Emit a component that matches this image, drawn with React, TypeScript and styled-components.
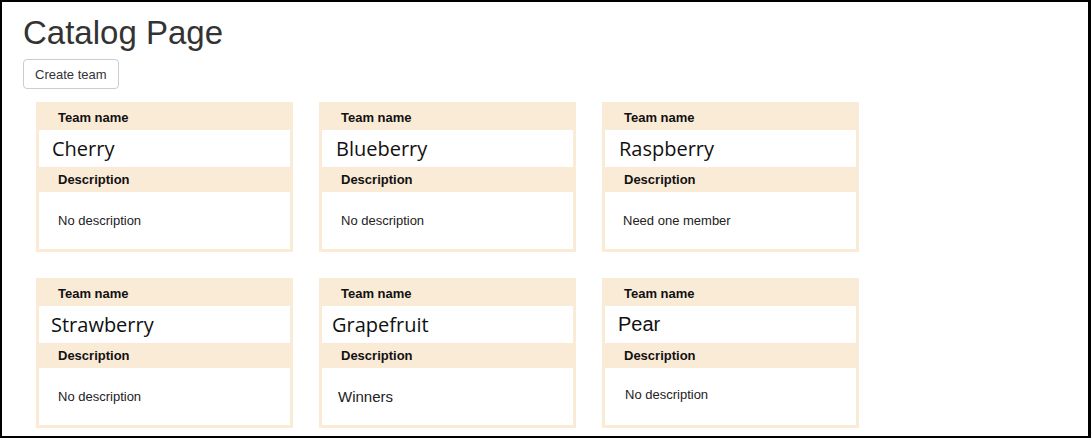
import React, { FunctionComponent } from 'react';
import styled, { createGlobalStyle } from 'styled-components';

const GlobalStyle = createGlobalStyle`
  html, body {
    margin: 0;
    padding: 0;
    background: #fff;
  }
  body {
    font-family: "Liberation Sans", Arial, sans-serif;
  }
`;

const S = {
  Frame: styled.div`
    box-sizing: border-box;
    width: 1091px;
    height: 438px;
    border-style: solid;
    border-color: #000;
    border-width: 2px 3px 2px 2px;
    padding: 13px 0 0 21px;
    overflow: hidden;
  `,

  Title: styled.h1`
    margin: 0;
    font-size: 33px;
    line-height: 36px;
    font-weight: 400;
    color: #333;
  `,

  CreateButton: styled.button`
    display: block;
    box-sizing: border-box;
    height: 30px;
    margin-top: 8px;
    padding: 0 11px;
    border: 1px solid #ccc;
    border-radius: 4px;
    background: #fff;
    color: #333;
    font-family: "Liberation Sans", Arial, sans-serif;
    font-size: 13px;
  `,

  Grid: styled.div`
    display: grid;
    grid-template-columns: repeat(3, 257px);
    column-gap: 26px;
    row-gap: 26px;
    margin: 13px 0 0 13px;
  `,

  Card: styled.div`
    box-sizing: border-box;
    display: flex;
    flex-direction: column;
    width: 257px;
    border: 3px solid antiquewhite;
  `,

  Label: styled.div`
    display: flex;
    align-items: center;
    height: 25px;
    padding-left: 19px;
    background: antiquewhite;
    color: #111;
    font-size: 13px;
    font-weight: 700;
  `,

  Name: styled.div<{ $indent: number; $arial?: boolean }>`
    display: flex;
    align-items: center;
    height: 37px;
    padding-left: ${(p) => p.$indent}px;
    background: #fff;
    color: #111;
    font-family: ${(p) =>
      p.$arial ? '"Liberation Sans", Arial, sans-serif' : '"Open Sans", "Noto Sans", sans-serif'};
    font-size: 20px;
  `,

  Body: styled.div<{ $indent: number; $size: number; $lift: number }>`
    display: flex;
    align-items: center;
    box-sizing: border-box;
    height: 57px;
    padding-left: ${(p) => p.$indent}px;
    padding-bottom: ${(p) => p.$lift}px;
    background: #fff;
    color: #222;
    font-size: ${(p) => p.$size}px;
  `,
};

type Team = {
  name: string;
  description: string;
  nameIndent: number;
  descIndent: number;
  descSize?: number;
  descLift?: number;
  arial?: boolean;
};

const teams: Team[] = [
  { name: 'Cherry', description: 'No description', nameIndent: 13, descIndent: 19 },
  { name: 'Blueberry', description: 'No description', nameIndent: 14, descIndent: 19 },
  { name: 'Raspberry', description: 'Need one member', nameIndent: 14, descIndent: 18 },
  { name: 'Strawberry', description: 'No description', nameIndent: 12, descIndent: 19 },
  { name: 'Grapefruit', description: 'Winners', nameIndent: 10, descIndent: 16, descSize: 15 },
  { name: 'Pear', description: 'No description', nameIndent: 13, descIndent: 20, descLift: 5, arial: true },
];

const TeamCard: FunctionComponent<{ team: Team }> = ({ team }) => (
  <S.Card>
    <S.Label>Team name</S.Label>
    <S.Name $indent={team.nameIndent} $arial={team.arial}>
      {team.name}
    </S.Name>
    <S.Label>Description</S.Label>
    <S.Body $indent={team.descIndent} $size={team.descSize ?? 13} $lift={team.descLift ?? 0}>
      {team.description}
    </S.Body>
  </S.Card>
);

const App: FunctionComponent = () => (
  <>
    <GlobalStyle />
    <S.Frame>
      <S.Title>Catalog Page</S.Title>
      <S.CreateButton type="button">Create team</S.CreateButton>
      <S.Grid>
        {teams.map((team) => (
          <TeamCard key={team.name} team={team} />
        ))}
      </S.Grid>
    </S.Frame>
  </>
);

export default App;
